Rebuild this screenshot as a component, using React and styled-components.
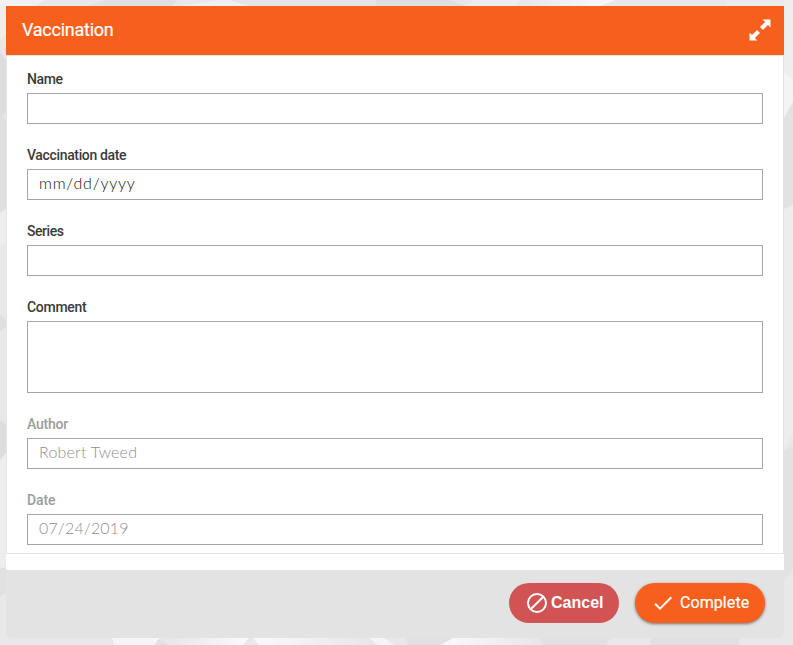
import React from "react";
import styled, { createGlobalStyle } from "styled-components";

const GlobalStyle = createGlobalStyle`
  *, *::before, *::after { box-sizing: border-box; }
  body { margin: 0; background: #e8e8e8; overflow: hidden; }
`;

const Page = styled.div`
  display: grid;
  height: 645px;
  overflow: hidden;
  font-family: Roboto, "Liberation Sans", sans-serif;
  > * { grid-area: 1 / 1; }
`;

const Backdrop = styled.svg`
  display: block;
  width: 793px;
  height: 645px;
`;

const Dialog = styled.section`
  display: flex;
  flex-direction: column;
  width: 778px;
  height: 632px;
  margin: 6px 0 0 6px;
  background: #fff;
  border-radius: 0 0 4px 4px;
  overflow: hidden;
  z-index: 1;
`;

const Header = styled.header`
  display: flex;
  align-items: center;
  justify-content: space-between;
  flex: none;
  height: 49px;
  padding: 0 13px 2px 16px;
  background: #f7601c;
  color: #fff;
`;

const Title = styled.h1`
  margin: 0;
  font-size: 18px;
  font-weight: 400;
  line-height: 24px;
  letter-spacing: -0.25px;
  -webkit-text-stroke: 0.2px;
`;

const ExpandButton = styled.button`
  display: flex;
  padding: 0;
  border: 0;
  background: none;
  color: inherit;
`;

const Form = styled.form`
  flex: none;
  height: 499px;
  padding: 14px 20px 0;
  border: 1px solid #e4e4e4;
`;

const Field = styled.label`
  display: block;
  height: ${(p) => (p.$tall ? 117 : 76)}px;
`;

const Label = styled.span`
  display: block;
  height: 23px;
  color: ${(p) => (p.$muted ? "#9c9c9c" : "#3b3b3b")};
  font-size: 14px;
  font-weight: 500;
  line-height: 18px;
  letter-spacing: ${(p) => p.$spacing || 0}px;
`;

const Control = styled.span`
  display: block;
  height: ${(p) => (p.$tall ? 72 : 31)}px;
  padding: 0 11px;
  border: 1px solid #a6a6a6;
  color: ${(p) => (p.$muted ? "#8f8f8f" : "#101010")};
  font-family: Lato, sans-serif;
  font-size: 16px;
  font-weight: 300;
  line-height: 25px;
  letter-spacing: ${(p) => p.$spacing || 0}px;
`;

const Footer = styled.footer`
  display: flex;
  justify-content: flex-end;
  gap: 16px;
  flex: none;
  height: 68px;
  margin-top: 16px;
  padding: 13px 19px 0 0;
  background: #e3e3e3;
`;

const Button = styled.button`
  display: flex;
  align-items: center;
  height: 40px;
  border: 0;
  border-radius: 20px;
  color: #fff;
  font-size: 16px;
  line-height: 20px;
  svg { flex: none; }
`;

const CancelButton = styled(Button)`
  width: 110px;
  padding: 0 0 0 16px;
  gap: 2px;
  background: #d25353;
  font-family: "Liberation Sans", Arial, sans-serif;
  font-weight: 700;
`;

const CompleteButton = styled(Button)`
  width: 130px;
  padding: 0 0 0 16px;
  gap: 5px;
  background: #f7601c;
  box-shadow: 0 1px 3px rgba(0, 0, 0, 0.5);
  font-family: Roboto, sans-serif;
  font-weight: 400;
  letter-spacing: 0.08px;
  -webkit-text-stroke: 0.2px;
`;

const shapes = [
  ["0,0 45,0 35,6 0,6", "#f1f1f1"],
  ["88,6 105,0 178,0 172,6", "#e0e0e0"],
  ["180,6 220,0 230,0 248,6", "#f0f0f0"],
  ["230,0 376,0 376,6 250,6", "#e4e4e4"],
  ["376,0 450,0 465,6 376,6", "#dfdfdf"],
  ["465,6 475,0 520,0 515,6", "#ededed"],
  ["515,6 530,0 615,0 600,6", "url(#brighten)"],
  ["727,0 793,0 793,6 727,6", "#ebebeb"],
  ["784,0 793,0 793,80 784,72", "#eeeeee"],
  ["784,72 793,80 793,104 784,118", "#f4f4f4"],
  ["784,118 793,102 793,208 784,209", "#e2e2e2"],
  ["784,209 793,205 793,431 784,451", "#ededed"],
  ["784,451 793,445 793,570 784,580", "#e2e2e2"],
  ["0,6 6,6 6,35 0,40", "#eeeeee"],
  ["0,52 6,60 6,112 0,118", "#dddddd"],
  ["0,112 6,120 6,210 0,213", "#e0e0e0"],
  ["0,213 6,209 6,243 0,246", "#eeeeee"],
  ["0,314 6,320 6,326 0,332", "#e0e0e0"],
  ["0,420 6,425 6,454 0,460", "#dddddd"],
  ["0,460 6,453 6,567 0,569", "#eeeeee"],
  ["0,569 6,567 6,593 0,597", "#e1e1e1"],
  ["112,638 160,638 154,645 115,645", "#f5f5f5"],
  ["160,638 168,645 154,645", "#e2e2e2"],
  ["165,638 249,638 243,645 172,645", "url(#brighten)"],
  ["253,638 369,638 376,645 259,645", "url(#dim)"],
  ["369,638 384,638 394,645 378,645", "#f5f5f5"],
  ["406,638 453,638 440,645 408,645", "#e1e1e1"],
  ["453,638 540,638 544,645 441,645", "url(#dim)"],
  ["540,638 612,638 605,645 544,645", "#e1e1e1"],
  ["652,638 740,638 738,645 650,645", "#e0e0e0"],
];

const FIELDS = [
  { label: "Name", labelSpacing: -0.4 },
  { label: "Vaccination date", labelSpacing: -0.35, value: "mm/dd/yyyy", spacing: 0.8 },
  { label: "Series", labelSpacing: -0.45 },
  { label: "Comment", labelSpacing: -0.3, tall: true },
  { label: "Author", labelSpacing: -0.25, value: "Robert Tweed", muted: true, spacing: 0.2 },
  { label: "Date", labelSpacing: -0.1, value: "07/24/2019", muted: true, spacing: 0.15 },
];

export default function App() {
  return (
    <Page>
      <GlobalStyle />
      <Backdrop viewBox="0 0 793 645" aria-hidden="true">
        <defs>
          <linearGradient id="brighten">
            <stop stopColor="#e6e6e6" />
            <stop offset="1" stopColor="#fafafa" />
          </linearGradient>
          <linearGradient id="dim">
            <stop stopColor="#fafafa" />
            <stop offset="1" stopColor="#e6e6e6" />
          </linearGradient>
        </defs>
        {shapes.map(([points, fill]) => (
          <polygon key={points} points={points} fill={fill} />
        ))}
      </Backdrop>
      <Dialog>
        <Header>
          <Title>Vaccination</Title>
          <ExpandButton type="button" aria-label="Expand">
            <svg width="22" height="22" viewBox="0 0 22 22" fill="currentColor">
              <path d="M13.6 0.5h7.9v7.9l-2.5-2.5-5.1 5.1-2.9-2.9 5.1-5.1zM0.5 21.5v-7.9L3 16.1 8.1 11l2.9 2.9L5.9 19l2.5 2.5z" />
            </svg>
          </ExpandButton>
        </Header>
        <Form>
          {FIELDS.map((f) => (
            <Field key={f.label} $tall={f.tall}>
              <Label $muted={f.muted} $spacing={f.labelSpacing}>{f.label}</Label>
              <Control $tall={f.tall} $muted={f.muted} $spacing={f.spacing}>
                {f.value}
              </Control>
            </Field>
          ))}
        </Form>
        <Footer>
          <CancelButton type="button">
            <svg width="24" height="24" viewBox="0 0 24 24" fill="none" stroke="currentColor" strokeWidth="2">
              <circle cx="12" cy="12" r="9" />
              <path d="M5.7 18.3L18.3 5.7" />
            </svg>
            Cancel
          </CancelButton>
          <CompleteButton type="button">
            <svg width="24" height="24" viewBox="0 0 24 24" fill="none" stroke="currentColor" strokeWidth="2">
              <path d="M4.1 12.7L9 17.6L20.3 6.3" />
            </svg>
            Complete
          </CompleteButton>
        </Footer>
      </Dialog>
    </Page>
  );
}
